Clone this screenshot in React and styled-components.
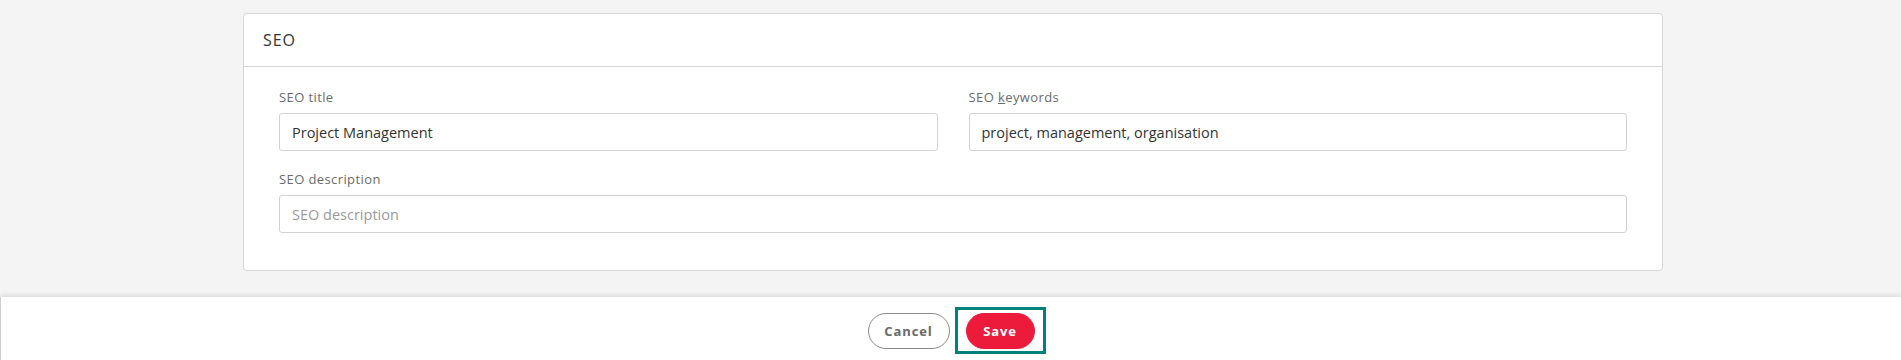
import React, { useState } from "react"
import styled, { createGlobalStyle } from "styled-components"

const GlobalStyle = createGlobalStyle`
  html, body {
    margin: 0;
    padding: 0;
    background: #f4f4f4;
    font-family: "Open Sans", "Noto Sans", Arial, sans-serif;
    overflow: hidden;
  }
`

const Page = styled.div`
  min-height: 360px;
  display: flex;
  flex-direction: column;
`

const Main = styled.div`
  padding: 13px 238px 26px 243px;
`

const Card = styled.section`
  background: #fff;
  border: 1px solid #d6d6d6;
  border-radius: 4px;
`

const CardHeader = styled.header`
  height: 52px;
  display: flex;
  align-items: center;
  padding: 0 19px;
  border-bottom: 1px solid #d6d6d6;
  font-size: 16px;
  font-weight: 500;
  letter-spacing: 0.9px;
  color: #333;
`

const CardBody = styled.div`
  padding: 21px 35px 37px;
  display: grid;
  grid-template-columns: 1fr 1fr;
  column-gap: 31px;
  row-gap: 19px;
`

const Field = styled.div`
  display: flex;
  flex-direction: column;
  grid-column: ${p => (p.$wide ? "1 / -1" : "auto")};
`

const Label = styled.label`
  font-size: 13px;
  color: #6b6b6b;
  letter-spacing: 0.4px;
  line-height: 18px;
  margin-bottom: 7px;
  u {
    text-decoration-thickness: 1px;
  }
`

const Input = styled.input`
  height: 38px;
  box-sizing: border-box;
  border: 1px solid #d2d2d2;
  border-radius: 3px;
  padding: 0 12px;
  font-family: inherit;
  font-size: 14.5px;
  color: #333;
  outline: none;
  &::placeholder {
    color: #9a9a9a;
  }
`

const Footer = styled.footer`
  flex: 1;
  background: #fff;
  border-left: 1px solid #cfcfcf;
  box-shadow: 0 -2px 5px rgba(0, 0, 0, 0.1);
  display: flex;
  justify-content: center;
  gap: 16px;
  padding-top: 16px;
`

const Button = styled.button`
  position: relative;
  height: 36px;
  border-radius: 18px;
  font-family: inherit;
  font-size: 13px;
  font-weight: 700;
  letter-spacing: 0.9px;
  cursor: pointer;
  border: 1px solid ${p => (p.$primary ? "#ec1b3b" : "#8a8a8a")};
  background: ${p => (p.$primary ? "#ec1b3b" : "#fff")};
  color: ${p => (p.$primary ? "#fff" : "#6a6a6a")};
  width: ${p => (p.$primary ? "69px" : "82px")};
  padding: 0;
  &::after {
    content: "";
    display: ${p => (p.$focused ? "block" : "none")};
    position: absolute;
    top: -7px;
    bottom: -6px;
    left: -12px;
    right: -12px;
    border: 3px solid #00817b;
  }
`

const App = () => {
  const [title, setTitle] = useState("Project Management")
  const [keywords, setKeywords] = useState("project, management, organisation")
  const [description, setDescription] = useState("")

  return (
    <Page>
      <GlobalStyle />
      <Main>
        <Card>
          <CardHeader>SEO</CardHeader>
          <CardBody>
            <Field>
              <Label>SEO title</Label>
              <Input value={title} onChange={e => setTitle(e.target.value)} />
            </Field>
            <Field>
              <Label>
                SEO <u>k</u>eywords
              </Label>
              <Input value={keywords} onChange={e => setKeywords(e.target.value)} />
            </Field>
            <Field $wide>
              <Label>SEO description</Label>
              <Input
                placeholder="SEO description"
                value={description}
                onChange={e => setDescription(e.target.value)}
              />
            </Field>
          </CardBody>
        </Card>
      </Main>
      <Footer>
        <Button>Cancel</Button>
        <Button $primary $focused>
          Save
        </Button>
      </Footer>
    </Page>
  )
}

export default App
